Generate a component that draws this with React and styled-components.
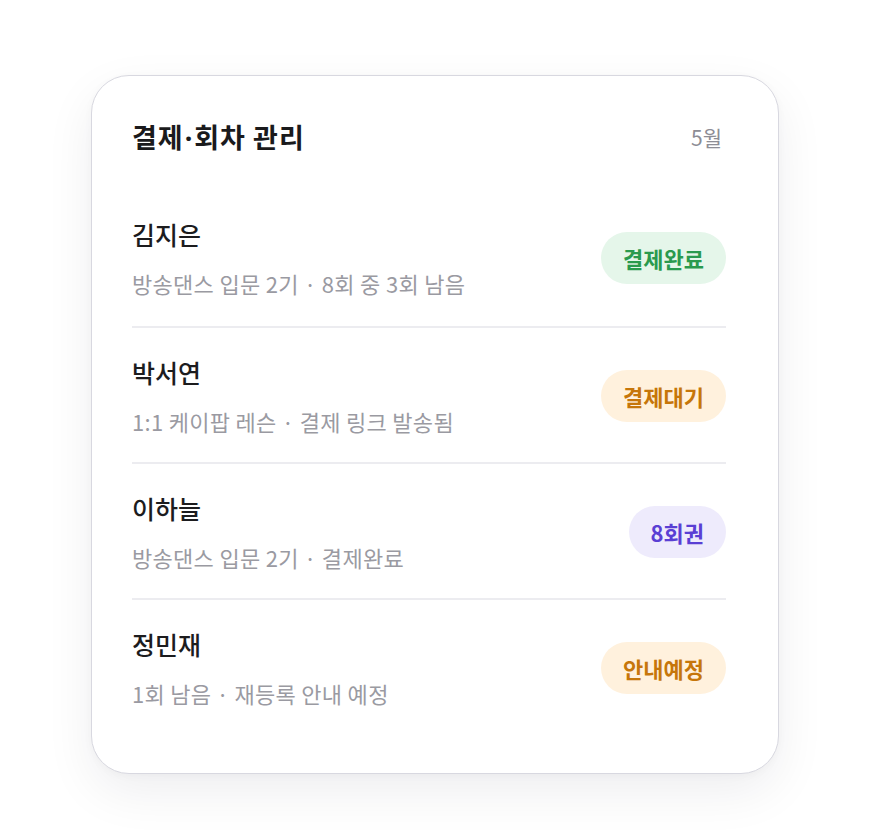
import React from 'react';
import styled, { createGlobalStyle } from 'styled-components';

const GlobalStyle = createGlobalStyle`
  html, body {
    margin: 0;
    padding: 0;
    background: #ffffff;
  }
  body {
    font-family: "Noto Sans CJK KR", "Noto Sans", sans-serif;
    -webkit-font-smoothing: antialiased;
  }
`;

const Page = styled.div`
  width: 879px;
  min-height: 837px;
  box-sizing: border-box;
  padding: 75px 0 0 91px;
`;

const Card = styled.section`
  width: 688px;
  height: 699px;
  box-sizing: border-box;
  padding: 44px 52px 0 40px;
  background: #ffffff;
  border: 1px solid #d8d8e0;
  border-radius: 38px;
  box-shadow: 0 18px 50px rgba(20, 20, 40, 0.07), 0 2px 8px rgba(20, 20, 40, 0.03);
`;

const Header = styled.header`
  display: flex;
  align-items: center;
  justify-content: space-between;
  height: 34px;
  margin-bottom: 64px;
`;

const Title = styled.h2`
  margin: 0;
  font-size: 27px;
  line-height: 34px;
  font-weight: 700;
  color: #1a1a1c;
  letter-spacing: 1px;
`;

/* narrow latin middle dot between the two title words */
const Dot = styled.span`
  font-family: "Noto Sans", sans-serif;
  line-height: 1;
  margin: 0 1px;
`;

const Month = styled.span`
  font-size: 21px;
  line-height: 34px;
  color: #8d8d95;
  margin-right: 4px;
`;

const List = styled.ul`
  list-style: none;
  margin: 0;
  padding: 0;
`;

const Row = styled.li`
  display: flex;
  align-items: center;
  justify-content: space-between;
  padding: 0 0 26px;
  border-bottom: 2px solid #ececf0;

  &:first-child {
    padding-bottom: 28px;
  }

  & + & {
    padding-top: 28px;
  }

  &:last-child {
    border-bottom: none;
  }
`;

const Info = styled.div`
  display: flex;
  flex-direction: column;
`;

const Name = styled.div`
  font-size: 25px;
  line-height: 32px;
  font-weight: 500;
  color: #1c1c1e;
`;

const Meta = styled.div`
  margin-top: 18px;
  font-size: 22px;
  line-height: 30px;
  color: #9a9aa2;
  letter-spacing: 0.3px;
`;

const tones = {
  green: { bg: '#e5f6ea', fg: '#2a9a4e' },
  orange: { bg: '#fff1dd', fg: '#c6760a' },
  purple: { bg: '#eeebfc', fg: '#5a3fd4' },
};

const Badge = styled.span`
  display: inline-flex;
  align-items: center;
  justify-content: center;
  height: 52px;
  padding: 0 22px;
  border-radius: 26px;
  font-size: 22px;
  font-weight: 700;
  background: ${({ $tone }) => tones[$tone].bg};
  color: ${({ $tone }) => tones[$tone].fg};
`;

const members = [
  { name: '김지은', meta: '방송댄스 입문 2기 · 8회 중 3회 남음', badge: '결제완료', tone: 'green' },
  { name: '박서연', meta: '1:1 케이팝 레슨 · 결제 링크 발송됨', badge: '결제대기', tone: 'orange' },
  { name: '이하늘', meta: '방송댄스 입문 2기 · 결제완료', badge: '8회권', tone: 'purple' },
  { name: '정민재', meta: '1회 남음 · 재등록 안내 예정', badge: '안내예정', tone: 'orange' },
];

export default function App() {
  return (
    <Page>
      <GlobalStyle />
      <Card>
        <Header>
          <Title>
            결제<Dot>·</Dot>회차 관리
          </Title>
          <Month>5월</Month>
        </Header>
        <List>
          {members.map((m) => (
            <Row key={m.name}>
              <Info>
                <Name>{m.name}</Name>
                <Meta>{m.meta}</Meta>
              </Info>
              <Badge $tone={m.tone}>{m.badge}</Badge>
            </Row>
          ))}
        </List>
      </Card>
    </Page>
  );
}
